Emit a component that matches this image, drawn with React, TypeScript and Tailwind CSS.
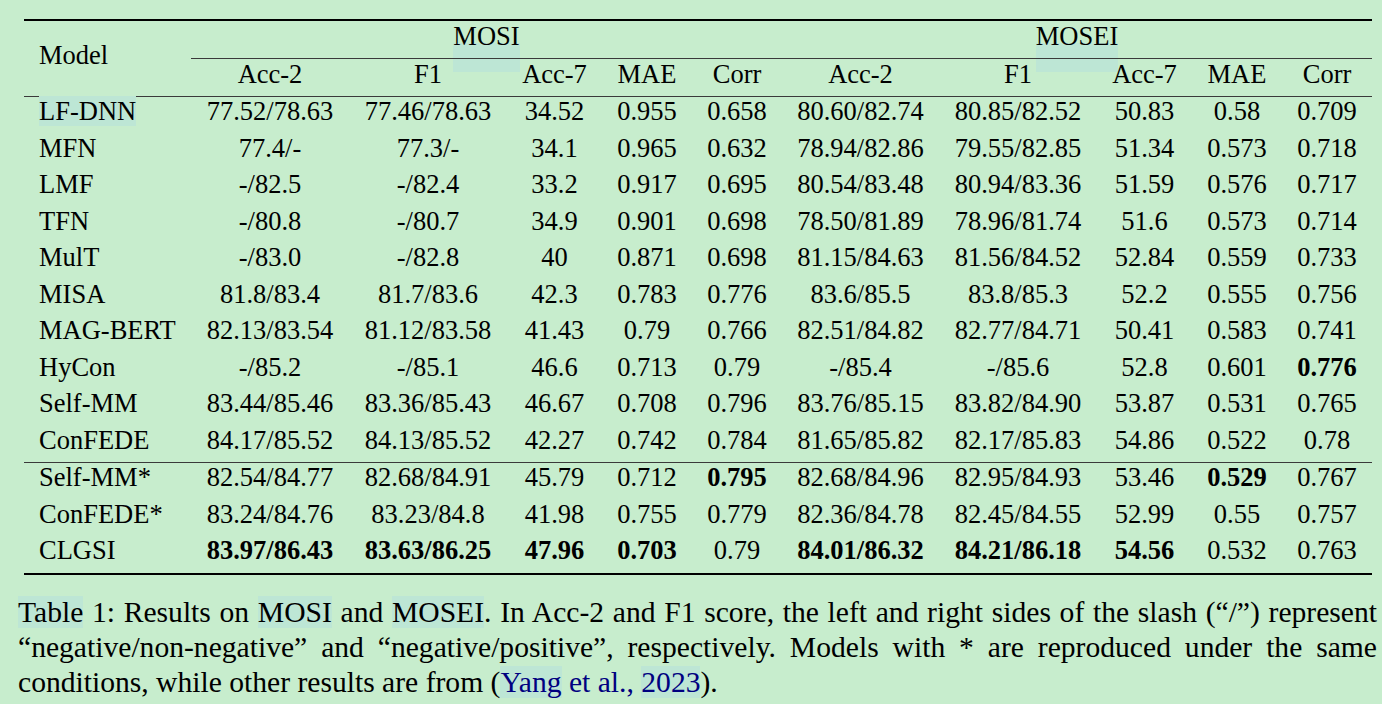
import clsx from "clsx";

const COLS = [
  "w-[167px]",
  "w-[158px]",
  "w-[158px]",
  "w-[95px]",
  "w-[90px]",
  "w-[90px]",
  "w-[157px]",
  "w-[158px]",
  "w-[95px]",
  "w-[90px]",
  "w-[90px]",
];

const SUB = ["Acc-2", "F1", "Acc-7", "MAE", "Corr", "Acc-2", "F1", "Acc-7", "MAE", "Corr"];

// "b:" marks a bold (best) value
const BASELINES = [
  ["LF-DNN", "77.52/78.63", "77.46/78.63", "34.52", "0.955", "0.658", "80.60/82.74", "80.85/82.52", "50.83", "0.58", "0.709"],
  ["MFN", "77.4/-", "77.3/-", "34.1", "0.965", "0.632", "78.94/82.86", "79.55/82.85", "51.34", "0.573", "0.718"],
  ["LMF", "-/82.5", "-/82.4", "33.2", "0.917", "0.695", "80.54/83.48", "80.94/83.36", "51.59", "0.576", "0.717"],
  ["TFN", "-/80.8", "-/80.7", "34.9", "0.901", "0.698", "78.50/81.89", "78.96/81.74", "51.6", "0.573", "0.714"],
  ["MulT", "-/83.0", "-/82.8", "40", "0.871", "0.698", "81.15/84.63", "81.56/84.52", "52.84", "0.559", "0.733"],
  ["MISA", "81.8/83.4", "81.7/83.6", "42.3", "0.783", "0.776", "83.6/85.5", "83.8/85.3", "52.2", "0.555", "0.756"],
  ["MAG-BERT", "82.13/83.54", "81.12/83.58", "41.43", "0.79", "0.766", "82.51/84.82", "82.77/84.71", "50.41", "0.583", "0.741"],
  ["HyCon", "-/85.2", "-/85.1", "46.6", "0.713", "0.79", "-/85.4", "-/85.6", "52.8", "0.601", "b:0.776"],
  ["Self-MM", "83.44/85.46", "83.36/85.43", "46.67", "0.708", "0.796", "83.76/85.15", "83.82/84.90", "53.87", "0.531", "0.765"],
  ["ConFEDE", "84.17/85.52", "84.13/85.52", "42.27", "0.742", "0.784", "81.65/85.82", "82.17/85.83", "54.86", "0.522", "0.78"],
];

const OURS = [
  ["Self-MM*", "82.54/84.77", "82.68/84.91", "45.79", "0.712", "b:0.795", "82.68/84.96", "82.95/84.93", "53.46", "b:0.529", "0.767"],
  ["ConFEDE*", "83.24/84.76", "83.23/84.8", "41.98", "0.755", "0.779", "82.36/84.78", "82.45/84.55", "52.99", "0.55", "0.757"],
  ["CLGSI", "b:83.97/86.43", "b:83.63/86.25", "b:47.96", "b:0.703", "0.79", "b:84.01/86.32", "b:84.21/86.18", "b:54.56", "0.532", "0.763"],
];

function Row({ cells }: { cells: string[] }) {
  const [name, ...vals] = cells;
  return (
    <div className="flex h-[36.5px] leading-[28px]">
      <div className={clsx(COLS[0], "pl-[15px]")}>
        {name === "LF-DNN" ? <span className="bg-[#bde6d5]">{name}</span> : name}
      </div>
      {vals.map((v, i) => {
        const bold = v.startsWith("b:");
        return (
          <div key={i} className={clsx(COLS[i + 1], "text-center", bold && "font-bold")}>
            {bold ? v.slice(2) : v}
          </div>
        );
      })}
    </div>
  );
}

function Hl({ children }: { children: React.ReactNode }) {
  return <span className="bg-[#bde6d5]">{children}</span>;
}

export default function App() {
  return (
    <div className="relative isolate w-[1382px] h-[704px] overflow-hidden bg-[#c7edcd] text-black font-['Liberation_Serif',serif]">
      {/* Table */}
      <div className="w-[1348px] ml-[24px] pt-[19px] text-[26.5px]">
        <div className="h-[2px] bg-black" />

        <div className="flex">
          <div className={clsx(COLS[0], "pl-[15px] pt-[19px] leading-[30px]")}>Model</div>
          <div className="flex flex-col w-[1181px]">
            <div className="flex h-[37px] leading-[31px]">
              <div className="w-[591px] text-center">
                <span className="relative inline-block">
                  <span className="absolute inset-x-0 top-[22px] h-[29px] bg-[#bde6d5] -z-10" />
                  MOSI
                </span>
              </div>
              <div className="w-[590px] text-center">
                <span className="relative inline-block">
                  <span className="absolute inset-x-0 top-[22px] h-[29px] bg-[#bde6d5] -z-10" />
                  MOSEI
                </span>
              </div>
            </div>
            <div className="h-px bg-[#3a3a3a]" />
            <div className="flex h-[37px] leading-[30px]">
              {SUB.map((s, i) => (
                <div key={i} className={clsx(COLS[i + 1], "text-center")}>
                  {s}
                </div>
              ))}
            </div>
          </div>
        </div>
        <div className="h-px bg-[#3a3a3a]" />

        {BASELINES.map((r) => (
          <Row key={r[0]} cells={r} />
        ))}
        <div className="h-px bg-[#3a3a3a]" />
        {OURS.map((r) => (
          <Row key={r[0]} cells={r} />
        ))}
        <div className="h-[2px] bg-black" />
      </div>

      {/* Caption */}
      <div className="ml-[18px] mt-[20px] w-[1359px] text-[29.6px] leading-[35px]">
        <div className="text-justify [text-align-last:justify]">
          <Hl>Table</Hl> 1: Results on <Hl>MOSI</Hl> and <Hl>MOSEI</Hl>. In Acc-2 and F1 score, the left and
          right sides of the slash (“/”) represent
        </div>
        <div className="text-justify [text-align-last:justify]">
          “negative/non-negative” and “negative/positive”, respectively. Models with * are reproduced under
          the same
        </div>
        <div>
          conditions, while other results are from (
          <span className="text-[#000080]">
            <Hl>Yang</Hl> et al., <Hl>2023</Hl>
          </span>
          ).
        </div>
      </div>
    </div>
  );
}
